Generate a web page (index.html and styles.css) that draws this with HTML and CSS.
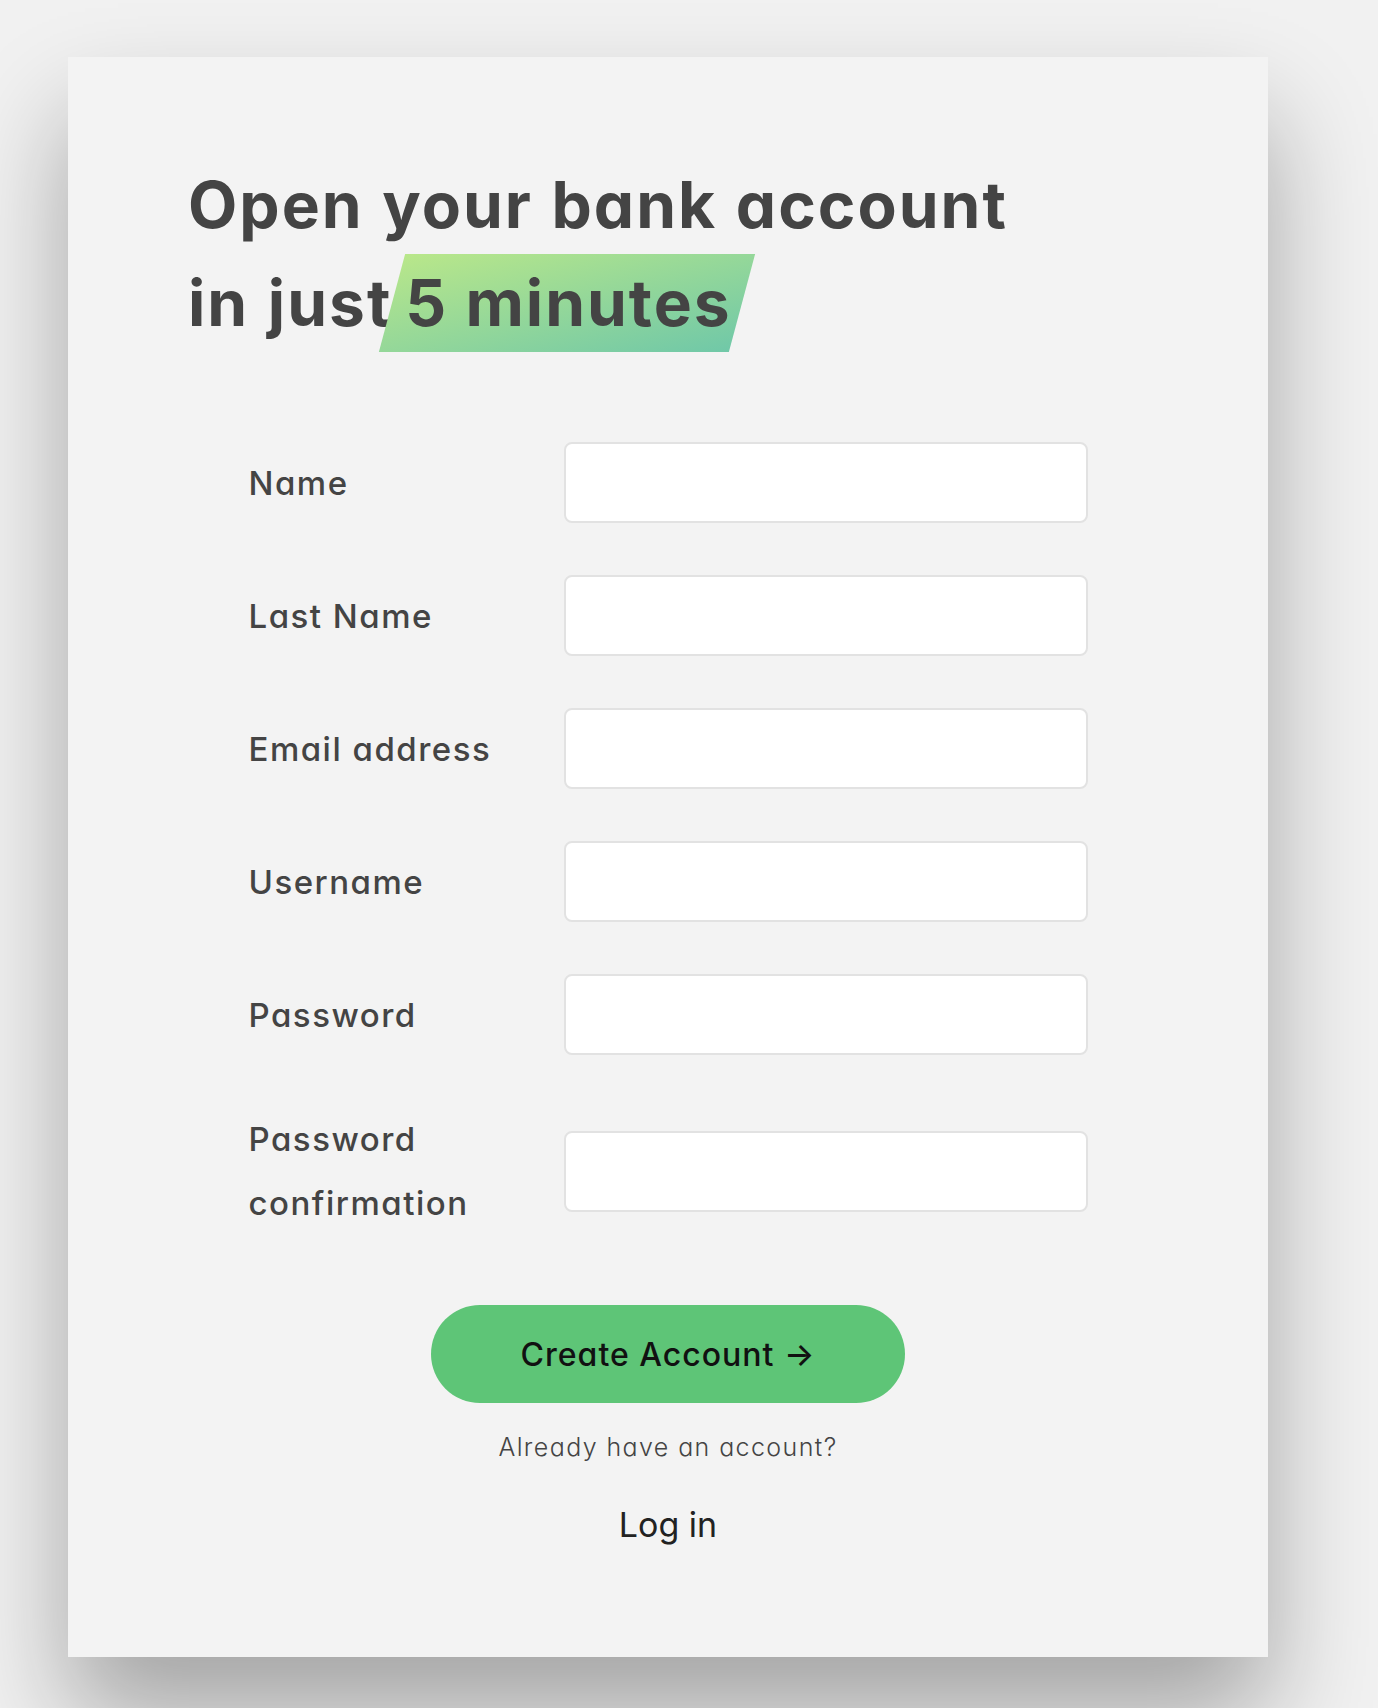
FILE: index.html
```html
<!DOCTYPE html>
<html lang="en">
<head>
<meta charset="utf-8">
<title>Open your bank account</title>
<link rel="stylesheet" href="styles.css">
</head>
<body>
<main class="card">
  <h1 class="title">Open your bank account<br>in just<span class="hl">5 minutes</span></h1>
  <form class="form">
    <label class="label" for="name">Name</label>
    <input class="field" id="name" type="text">
    <label class="label" for="last">Last Name</label>
    <input class="field" id="last" type="text">
    <label class="label" for="email">Email address</label>
    <input class="field" id="email" type="email">
    <label class="label" for="user">Username</label>
    <input class="field" id="user" type="text">
    <label class="label" for="pass">Password</label>
    <input class="field" id="pass" type="password">
    <label class="label" for="conf">Password<br>confirmation</label>
    <input class="field" id="conf" type="password">
  </form>
  <div class="actions">
    <button class="btn" type="button">Create Account →</button>
    <p class="already">Already have an account?</p>
    <a class="login" href="#">Log in</a>
  </div>
</main>
</body>
</html>
```
FILE: styles.css
```css
html, body {
  margin: 0;
  padding: 0;
}
body {
  background: #f1f1f1;
  font-family: "Inter", "Liberation Sans", sans-serif;
  font-feature-settings: "cv11";
  color: #444;
  padding: 57px 0 60px 68px;
}
.card {
  box-sizing: border-box;
  width: 1200px;
  height: 1600px;
  background: #f3f3f3;
  box-shadow: 0 60px 100px rgba(0, 0, 0, 0.32);
  padding: 99px 120px 0 120px;
}
.title {
  margin: 0;
  font-size: 64px;
  line-height: 98px;
  font-weight: 700;
  color: #444;
  letter-spacing: 2px;
  word-spacing: 1.5px;
}
.hl {
  position: relative;
  z-index: 0;
  display: inline-block;
  margin-left: 0;
  padding: 0 11px 0 13px;
  word-spacing: 0;
}
.hl::before {
  content: "";
  position: absolute;
  left: 0;
  right: 0;
  top: 0;
  bottom: 0;
  z-index: -1;
  transform: skewX(-15deg);
  background: linear-gradient(to bottom right, #b9e78a, #70c8a8);
}
.form {
  width: 839px;
  margin: 90px auto 0;
  display: grid;
  grid-template-columns: 315px 524px;
  row-gap: 52px;
  align-items: center;
}
.label {
  font-size: 33px;
  line-height: 64px;
  font-weight: 500;
  color: #444;
  letter-spacing: 1.5px;
}
.field {
  box-sizing: border-box;
  height: 81px;
  width: 524px;
  background: #fff;
  border: 2px solid #e2e2e2;
  border-radius: 8px;
  margin: 0;
}
.actions {
  display: flex;
  flex-direction: column;
  align-items: center;
  margin-top: 70px;
}
.btn {
  width: 474px;
  height: 98px;
  border: 0;
  border-radius: 49px;
  background: #5ec577;
  color: #111;
  font-family: inherit;
  font-feature-settings: "cv11";
  font-size: 32px;
  font-weight: 500;
  letter-spacing: 1px;
  padding: 0;
}
.already {
  margin: 25px 0 0;
  font-size: 25px;
  line-height: 38px;
  font-weight: 300;
  color: #444;
  letter-spacing: 1.4px;
}
.login {
  margin-top: 33px;
  font-size: 34px;
  line-height: 51px;
  font-weight: 400;
  color: #222;
  text-decoration: none;
}
```
